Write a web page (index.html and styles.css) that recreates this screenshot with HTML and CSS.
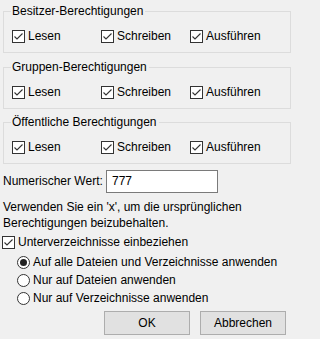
FILE: index.html
```html
<!DOCTYPE html>
<html lang="de">
<head>
<meta charset="utf-8">
<link rel="stylesheet" href="styles.css">
</head>
<body>
<div class="dialog">
  <fieldset class="group">
    <legend>Besitzer-Berechtigungen</legend>
    <div class="row">
      <label class="item"><span class="cb"><svg viewBox="0 0 11 11"><path d="M1.5 5.5 L4 8 L9.5 2.5"/></svg></span>Lesen</label>
      <label class="item"><span class="cb"><svg viewBox="0 0 11 11"><path d="M1.5 5.5 L4 8 L9.5 2.5"/></svg></span>Schreiben</label>
      <label class="item"><span class="cb"><svg viewBox="0 0 11 11"><path d="M1.5 5.5 L4 8 L9.5 2.5"/></svg></span>Ausführen</label>
    </div>
  </fieldset>
  <fieldset class="group">
    <legend>Gruppen-Berechtigungen</legend>
    <div class="row">
      <label class="item"><span class="cb"><svg viewBox="0 0 11 11"><path d="M1.5 5.5 L4 8 L9.5 2.5"/></svg></span>Lesen</label>
      <label class="item"><span class="cb"><svg viewBox="0 0 11 11"><path d="M1.5 5.5 L4 8 L9.5 2.5"/></svg></span>Schreiben</label>
      <label class="item"><span class="cb"><svg viewBox="0 0 11 11"><path d="M1.5 5.5 L4 8 L9.5 2.5"/></svg></span>Ausführen</label>
    </div>
  </fieldset>
  <fieldset class="group">
    <legend>Öffentliche Berechtigungen</legend>
    <div class="row">
      <label class="item"><span class="cb"><svg viewBox="0 0 11 11"><path d="M1.5 5.5 L4 8 L9.5 2.5"/></svg></span>Lesen</label>
      <label class="item"><span class="cb"><svg viewBox="0 0 11 11"><path d="M1.5 5.5 L4 8 L9.5 2.5"/></svg></span>Schreiben</label>
      <label class="item"><span class="cb"><svg viewBox="0 0 11 11"><path d="M1.5 5.5 L4 8 L9.5 2.5"/></svg></span>Ausführen</label>
    </div>
  </fieldset>
  <div class="numeric">
    <span class="num-label">Numerischer Wert:</span>
    <span class="input">777</span>
  </div>
  <p class="hint">Verwenden Sie ein 'x', um die ursprünglichen<br>Berechtigungen beizubehalten.</p>
  <label class="item sub"><span class="cb"><svg viewBox="0 0 11 11"><path d="M1.5 5.5 L4 8 L9.5 2.5"/></svg></span>Unterverzeichnisse einbeziehen</label>
  <div class="radios">
    <label class="item"><span class="rb on"></span>Auf alle Dateien und Verzeichnisse anwenden</label>
    <label class="item"><span class="rb"></span>Nur auf Dateien anwenden</label>
    <label class="item"><span class="rb"></span>Nur auf Verzeichnisse anwenden</label>
  </div>
  <div class="buttons">
    <span class="btn">OK</span>
    <span class="btn">Abbrechen</span>
  </div>
</div>
</body>
</html>
```
FILE: styles.css
```css
html, body {
  margin: 0;
  padding: 0;
  background: #f0f0f0;
}
body {
  font-family: "Liberation Sans", Arial, sans-serif;
  font-size: 12px;
  line-height: 15px;
  color: #000;
}
.dialog {
  box-sizing: border-box;
  width: 293px;
  height: 339px;
  padding: 4px 2px 0 3px;
  overflow: hidden;
}
.group {
  min-width: 0;
  margin: 0 0 6px 0;
  padding: 10px 8px 8px 8px;
  border: 1px solid #dcdcdc;
}
.group:first-child {
  margin-bottom: 7px;
}
.group legend {
  padding: 0 2px 0 1px;
  margin-left: -1px;
  line-height: 15px;
}
.row {
  display: grid;
  grid-template-columns: 89px 89px auto;
}
.item {
  display: flex;
  align-items: center;
  gap: 3px;
  height: 15px;
  white-space: nowrap;
}
.cb {
  box-sizing: border-box;
  width: 13px;
  height: 13px;
  border: 1px solid #333;
  background: #fff;
  display: flex;
  flex: none;
}
.cb svg {
  width: 11px;
  height: 11px;
  fill: none;
  stroke: #333;
  stroke-width: 1.1;
}
.numeric {
  display: flex;
  align-items: center;
  margin-top: 5px;
}
.num-label {
  width: 103px;
  flex: none;
}
.input {
  box-sizing: border-box;
  width: 112px;
  height: 23px;
  border: 1px solid #7a7a7a;
  background: #fff;
  padding: 0 0 0 5px;
  line-height: 21px;
}
.hint {
  margin: 6px 0 0 0;
  line-height: 16px;
}
.sub {
  margin-top: 4px;
  margin-left: -1px;
}
.radios {
  margin-top: 5px;
  padding-left: 14px;
  display: flex;
  flex-direction: column;
  gap: 3px;
}
.rb {
  box-sizing: border-box;
  width: 13px;
  height: 13px;
  border: 1px solid #333;
  border-radius: 50%;
  background: #fff;
  display: flex;
  align-items: center;
  justify-content: center;
  flex: none;
}
.rb.on::after {
  content: "";
  width: 7px;
  height: 7px;
  border-radius: 50%;
  background: #222;
}
.buttons {
  display: flex;
  justify-content: flex-end;
  gap: 10px;
  margin-top: 5px;
  padding-right: 5px;
}
.btn {
  box-sizing: border-box;
  width: 86px;
  height: 24px;
  border: 1px solid #adadad;
  background: #e1e1e1;
  display: flex;
  align-items: center;
  justify-content: center;
}
```
